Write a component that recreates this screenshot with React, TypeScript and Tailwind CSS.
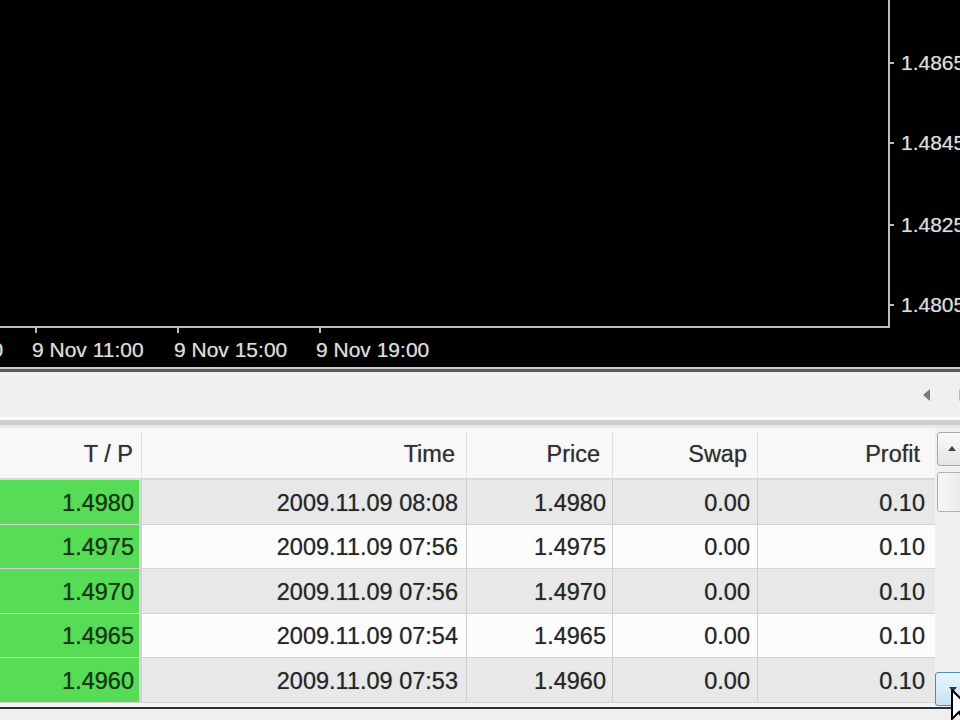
import React from "react";

const rows = [
  { tp: "1.4980", time: "2009.11.09 08:08", price: "1.4980" },
  { tp: "1.4975", time: "2009.11.09 07:56", price: "1.4975" },
  { tp: "1.4970", time: "2009.11.09 07:56", price: "1.4970" },
  { tp: "1.4965", time: "2009.11.09 07:54", price: "1.4965" },
  { tp: "1.4960", time: "2009.11.09 07:53", price: "1.4960" },
];

const priceLabels = [
  { y: 63, t: "1.4865" },
  { y: 143, t: "1.4845" },
  { y: 225, t: "1.4825" },
  { y: 305, t: "1.4805" },
];

const timeLabels = [
  { x: -107, t: "9 Nov 07:00" },
  { x: 35, t: "9 Nov 11:00" },
  { x: 177, t: "9 Nov 15:00" },
  { x: 319, t: "9 Nov 19:00" },
];

export default function App() {
  return (
    <div className="relative w-[960px] h-[720px] overflow-hidden bg-[#efefef] font-['Liberation_Sans',Arial,sans-serif] flex flex-col">
      {/* Chart */}
      <div className="relative h-[367px] shrink-0 bg-black overflow-hidden">
        <div className="absolute left-[888px] top-0 w-[2px] h-[328px] bg-[#bdbdbd]" />
        <div className="absolute left-0 top-[326px] w-[890px] h-[2px] bg-[#bdbdbd]" />
        {priceLabels.map((p) => (
          <React.Fragment key={p.t}>
            <div
              className="absolute left-[890px] w-[4px] h-[2px] bg-[#bdbdbd]"
              style={{ top: p.y - 1 }}
            />
            <div
              className="absolute left-[901px] text-[21px] leading-none text-[#dcdcdc] whitespace-nowrap [text-shadow:0_0_1px_rgba(255,255,255,0.5)]"
              style={{ top: p.y - 11 }}
            >
              {p.t}
            </div>
          </React.Fragment>
        ))}
        {timeLabels.map((t) => (
          <React.Fragment key={t.t}>
            <div
              className="absolute top-[328px] w-[2px] h-[5px] bg-[#bdbdbd]"
              style={{ left: t.x }}
            />
            <div
              className="absolute top-[339px] text-[21px] leading-none text-[#dcdcdc] whitespace-nowrap [text-shadow:0_0_1px_rgba(255,255,255,0.5)]"
              style={{ left: t.x - 3 }}
            >
              {t.t}
            </div>
          </React.Fragment>
        ))}
      </div>

      {/* Separator */}
      <div className="h-[2px] shrink-0 bg-[#cbcbcb]" />
      <div className="h-[3px] shrink-0 bg-[#5a5a5a]" />

      {/* Strip */}
      <div className="h-[45px] shrink-0 bg-[#efefef] flex items-center justify-end gap-[27px] -mr-[6px]">
        <svg width="8" height="12" viewBox="0 0 8 12">
          <path d="M7 0 L0 6 L7 12 Z" fill="#7a7a7a" />
        </svg>
        <svg width="8" height="12" viewBox="0 0 8 12">
          <path d="M1 0 L8 6 L1 12 Z" fill="#b8b8b8" />
        </svg>
      </div>
      <div className="h-[3px] shrink-0 bg-[#fafafa]" />
      <div className="h-[5px] shrink-0 bg-[#cdcdcd]" />
      <div className="h-[3px] shrink-0 bg-[#e9e9e9]" />

      {/* Table */}
      <div className="h-[279px] shrink-0 flex bg-[#f4f4f4]">
        <div className="w-[935px] flex flex-col">
          {/* Header */}
          <div className="h-[52px] shrink-0 flex bg-[#f8f8f8] border-b-2 border-[#d9d9d9] text-[23.5px] leading-none text-[#303030] pt-[4px] [text-shadow:0_0_1px_rgba(0,0,0,0.45)]">
            <div className="w-[142px] flex items-center justify-end pr-[8px] border-r border-[#e2e2e2]">T / P</div>
            <div className="w-[325px] flex items-center justify-end pr-[11px] border-r border-[#e2e2e2]">Time</div>
            <div className="w-[146px] flex items-center justify-end pr-[12px] border-r border-[#e2e2e2]">Price</div>
            <div className="w-[145px] flex items-center justify-end pr-[10px] border-r border-[#e2e2e2]">Swap</div>
            <div className="w-[177px] flex items-center justify-end pr-[15px]">Profit</div>
          </div>
          {/* Rows */}
          {rows.map((r, i) => {
            const bg = i % 2 === 0 ? "bg-[#e8e8e8]" : "bg-[#fcfcfc]";
            return (
              <div
                key={i}
                className={`h-[44.5px] shrink-0 flex text-[23.5px] leading-none text-[#262626] border-b border-[#d3d3d3] [text-shadow:0_0_1px_rgba(0,0,0,0.45)] ${bg}`}
              >
                <div className="w-[142px] flex items-center justify-end pt-[3px] pr-[5px] bg-[#56dc56] text-[#143514] border-r-[3px] border-[#d2d2d2]">
                  {r.tp}
                </div>
                <div className="w-[325px] flex items-center justify-end pt-[3px] pr-[8px] border-r border-[#cfcfcf]">
                  {r.time}
                </div>
                <div className="w-[146px] flex items-center justify-end pt-[3px] pr-[6px] border-r border-[#cfcfcf]">
                  {r.price}
                </div>
                <div className="w-[145px] flex items-center justify-end pt-[3px] pr-[7px] border-r border-[#cfcfcf]">
                  0.00
                </div>
                <div className="w-[177px] flex items-center justify-end pt-[3px] pr-[10px]">0.10</div>
              </div>
            );
          })}
        </div>

        {/* Scrollbar */}
        <div className="relative w-[25px] bg-[#f0f0f0] overflow-hidden">
          <div className="absolute left-[2px] top-[4px] w-[34px] h-[34px] rounded-[3px] border border-[#a8a8a8] bg-gradient-to-b from-[#fafafa] to-[#e4e4e4]">
            <svg className="absolute left-[10px] top-[12px]" width="8" height="6" viewBox="0 0 8 6">
              <path d="M0 6 L4 1 L8 6 Z" fill="#444" />
            </svg>
          </div>
          <div className="absolute left-[2px] top-[44px] w-[34px] h-[40px] rounded-[3px] border border-[#b0b0b0] bg-gradient-to-r from-[#f7f7f7] to-[#e6e6e6]" />
          <div className="absolute left-0 top-[244px] w-[36px] h-[34px] rounded-[3px] border border-[#4a8cc0] bg-gradient-to-b from-[#e8f5fd] to-[#c4e3f6]">
            <svg className="absolute left-[13px] top-[14px]" width="8" height="6" viewBox="0 0 8 6">
              <path d="M0 0 L8 0 L4 5 Z" fill="#1e3f5a" />
            </svg>
          </div>
        </div>
      </div>

      {/* Bottom */}
      <div className="h-[2px] shrink-0 bg-[#2e2e2e] mr-[8px]" />
      <div className="flex-1 bg-[#efefef]" />

      {/* Mouse cursor */}
      <svg
        className="absolute left-[951px] top-[689px]"
        width="20"
        height="34"
        viewBox="0 0 20 34"
      >
        <path d="M1 1 L1 30 L8 23 L13 33 L17 31 L12 21 L21 21 Z" fill="#ffffff" stroke="#000" strokeWidth="2" />
      </svg>
    </div>
  );
}
